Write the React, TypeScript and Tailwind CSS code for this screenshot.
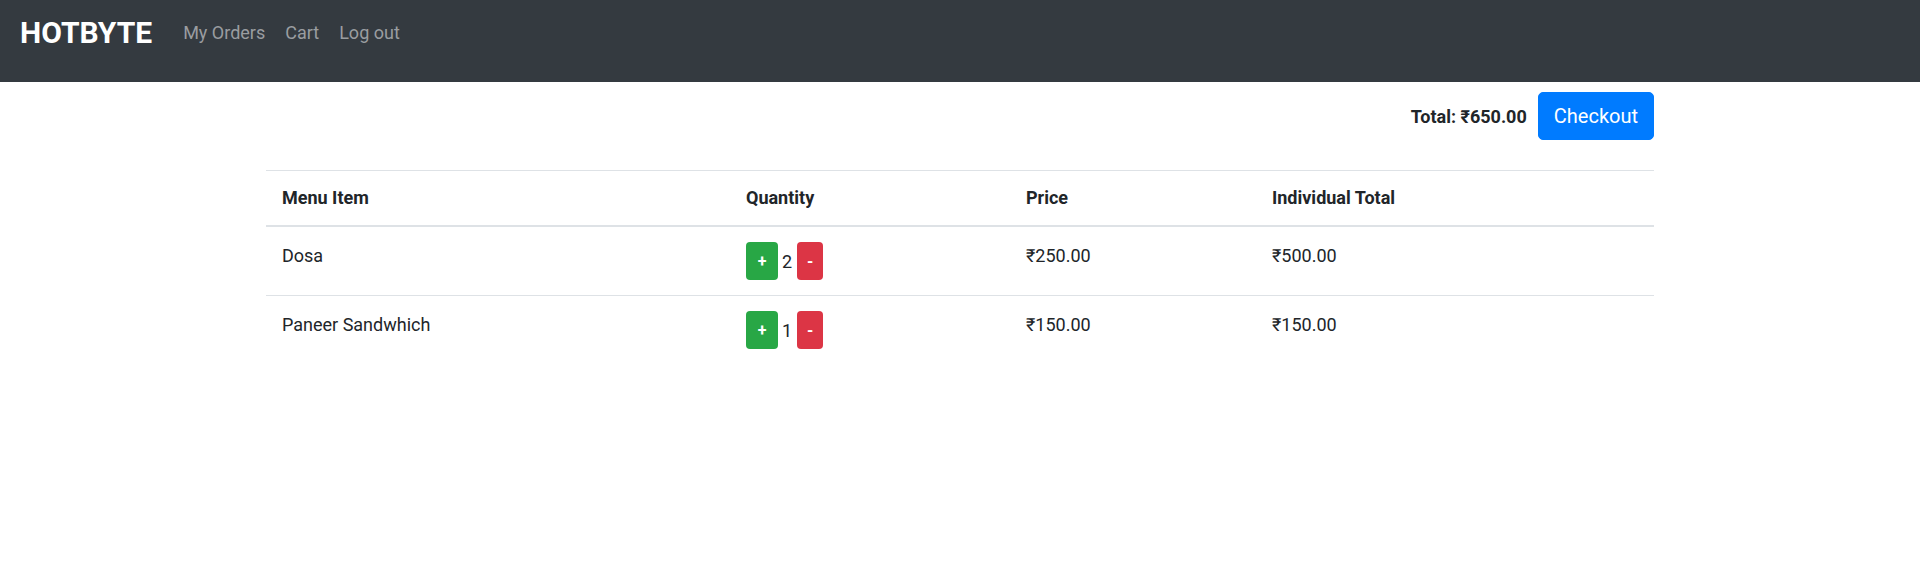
import React from "react";

const rows = [
  { name: "Dosa", qty: 2, price: "₹250.00", total: "₹500.00" },
  { name: "Paneer Sandwhich", qty: 1, price: "₹150.00", total: "₹150.00" },
];

export default function App() {
  return (
    <div className="min-h-[579px] bg-white text-[#212529] font-['Roboto',sans-serif]">
      <nav className="h-[82px] bg-[#343a40] pl-[20px] pt-[10px] flex items-start">
        <div className="flex items-center">
          <span className="text-[30px] leading-[45px] font-bold text-white mr-[21px]">HOTBYTE</span>
          <a className="px-[10px] text-[18px] leading-[27px] text-[#9a9da0]">My Orders</a>
          <a className="px-[10px] text-[18px] leading-[27px] text-[#9a9da0]">Cart</a>
          <a className="px-[10px] text-[18px] leading-[27px] text-[#9a9da0]">Log out</a>
        </div>
      </nav>
      <div className="w-[1388px] ml-[266px]">
        <div className="mt-[10px] flex justify-end items-center">
          <span className="text-[18px] font-bold mr-[11px]">Total: ₹650.00</span>
          <button className="bg-[#007bff] text-white text-[20px] leading-[30px] px-[15px] py-[8px] border border-[#007bff] rounded-[5px]">
            Checkout
          </button>
        </div>
        <table className="mt-[30px] w-full border-collapse text-[18px] table-fixed">
          <colgroup>
            <col style={{ width: 464 }} />
            <col style={{ width: 280 }} />
            <col style={{ width: 246 }} />
            <col />
          </colgroup>
          <thead>
            <tr>
              <th className="text-left font-bold px-[16px] py-[15px] leading-[24px] border-t border-b-2 border-[#dee2e6]">Menu Item</th>
              <th className="text-left font-bold px-[16px] py-[15px] leading-[24px] border-t border-b-2 border-[#dee2e6]">Quantity</th>
              <th className="text-left font-bold px-[16px] py-[15px] leading-[24px] border-t border-b-2 border-[#dee2e6]">Price</th>
              <th className="text-left font-bold px-[16px] py-[15px] leading-[24px] border-t border-b-2 border-[#dee2e6]">Individual Total</th>
            </tr>
          </thead>
          <tbody>
            {rows.map((r, i) => (
              <tr key={r.name} className={i > 0 ? "border-t border-[#dee2e6]" : ""}>
                <td className="align-top px-[16px] pt-[15px] pb-[15px] leading-[27px]">{r.name}</td>
                <td className="align-top px-[16px] pt-[15px] pb-[15px] leading-[27px]">
                  <div className="flex items-center">
                    <button className="w-[32px] h-[38px] rounded-[4px] bg-[#28a745] text-white font-bold text-[16px] flex items-center justify-center">+</button>
                    <span className="ml-[4px] mr-[5px]">{r.qty}</span>
                    <button className="w-[26px] h-[38px] rounded-[4px] bg-[#dc3545] text-white font-bold text-[16px] flex items-center justify-center">-</button>
                  </div>
                </td>
                <td className="align-top px-[16px] pt-[15px] pb-[15px] leading-[27px]">{r.price}</td>
                <td className="align-top px-[16px] pt-[15px] pb-[15px] leading-[27px]">{r.total}</td>
              </tr>
            ))}
          </tbody>
        </table>
      </div>
    </div>
  );
}
